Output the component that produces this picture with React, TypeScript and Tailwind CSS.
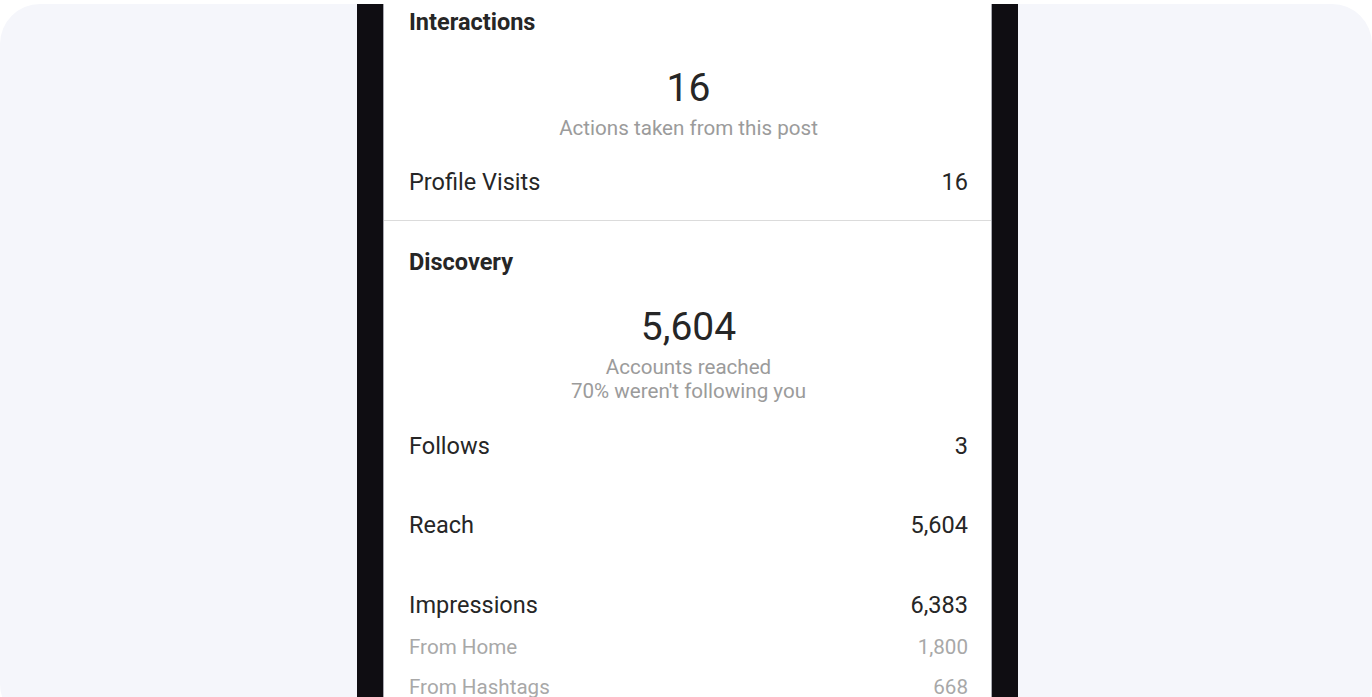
const rows = [
  { label: "Follows", value: "3", gap: "mt-[29px]" },
  { label: "Reach", value: "5,604", gap: "mt-[51px]" },
  { label: "Impressions", value: "6,383", gap: "mt-[52px]" },
];

const subRows = [
  { label: "From Home", value: "1,800" },
  { label: "From Hashtags", value: "668" },
];

export default function App() {
  return (
    <main className="h-[697px] w-full overflow-hidden bg-white pt-[4px] font-['Roboto',sans-serif]">
      <div className="flex h-[720px] justify-center overflow-hidden rounded-[40px] bg-[#f5f6fb] pl-[3px]">
        <div className="w-[661px] bg-[#0f0d12] px-[26px]">
          <div className="h-full border-x border-[#a9a9b1] bg-white pl-[25px] pr-[23px] text-[#262626]">
            <h2 className="text-[23.5px] font-bold leading-[36px]">Interactions</h2>

            <div className="mt-[26px] text-center">
              <p className="text-[39px] leading-[44px]">16</p>
              <p className="mt-[6px] text-[20.6px] leading-[24px] text-[#9b9b9b]">
                Actions taken from this post
              </p>
            </div>

            <div className="mt-[28px] flex justify-between text-[23.5px] leading-[28px]">
              <span>Profile Visits</span>
              <span>16</span>
            </div>

            <div className="-ml-[25px] -mr-[23px] mt-[24px] border-t border-[#dbdbdb]" />

            <h2 className="mt-[23px] text-[23.5px] font-bold leading-[36px]">Discovery</h2>

            <div className="mt-[25px] text-center">
              <p className="text-[39px] leading-[44px]">5,604</p>
              <p className="mt-[6px] text-[20.6px] leading-[24px] text-[#9b9b9b]">
                Accounts reached
              </p>
              <p className="text-[20.6px] leading-[24px] text-[#9b9b9b]">
                70% weren't following you
              </p>
            </div>

            {rows.map((row) => (
              <div
                key={row.label}
                className={`${row.gap} flex justify-between text-[23.5px] leading-[28px]`}
              >
                <span>{row.label}</span>
                <span>{row.value}</span>
              </div>
            ))}

            {subRows.map((row) => (
              <div
                key={row.label}
                className="mt-[16px] flex justify-between text-[20.6px] leading-[24px] text-[#a8a8a8]"
              >
                <span>{row.label}</span>
                <span>{row.value}</span>
              </div>
            ))}
          </div>
        </div>
      </div>
    </main>
  );
}
